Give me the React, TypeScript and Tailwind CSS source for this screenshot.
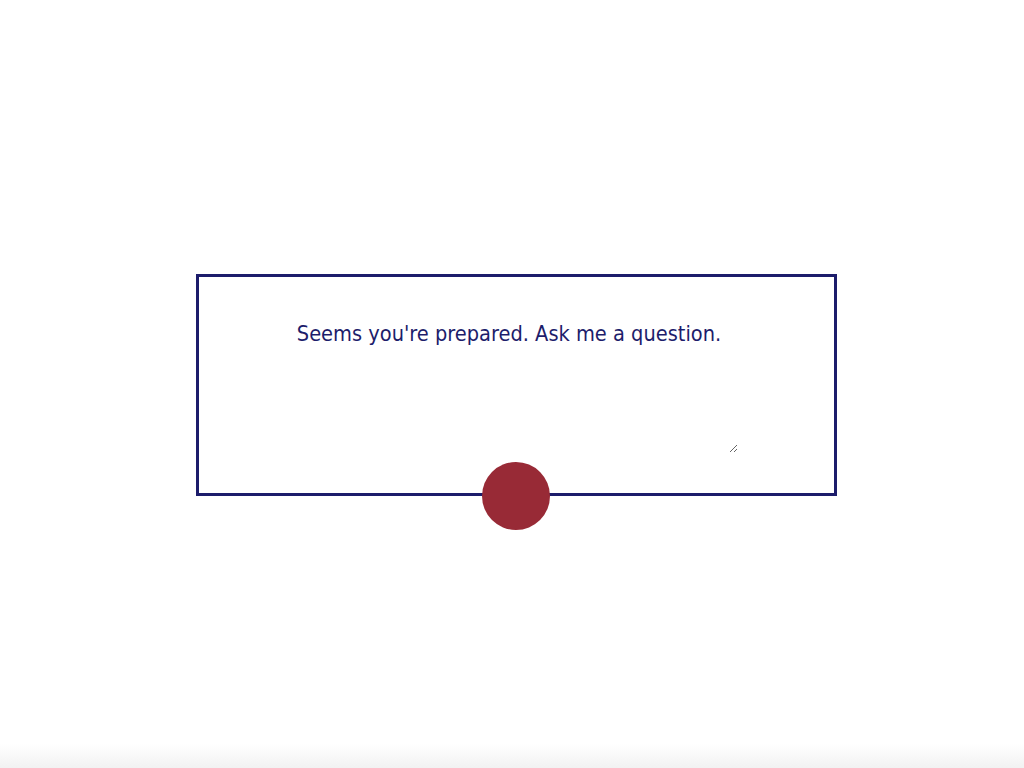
import React from "react";

export default function App() {
  return (
    <div className="relative w-[1024px] h-[768px] bg-white overflow-hidden">
      <div className="pt-[274px] pl-[196px]">
        <div className="relative w-[641px] h-[222px] border-[3px] border-[#1d1d6b] box-border">
          <div className="pt-[44px] pl-[81px]">
            <textarea
              className="block w-[458px] h-[132px] resize bg-transparent outline-none border-0 p-0 text-center text-[21.6px] leading-[26px] text-[#1d1d6b]"
              style={{ fontFamily: '"DejaVu Sans Condensed", "DejaVu Sans", sans-serif' }}
              defaultValue="Seems you're prepared. Ask me a question."
            />
          </div>
          <button
            aria-label="record"
            className="absolute left-[283px] top-[185px] w-[68px] h-[68px] rounded-full bg-[#982a36]"
          />
        </div>
      </div>
      <div className="absolute left-0 bottom-0 w-full h-[24px] bg-gradient-to-b from-white to-[#f2f2f2]" />
    </div>
  );
}
